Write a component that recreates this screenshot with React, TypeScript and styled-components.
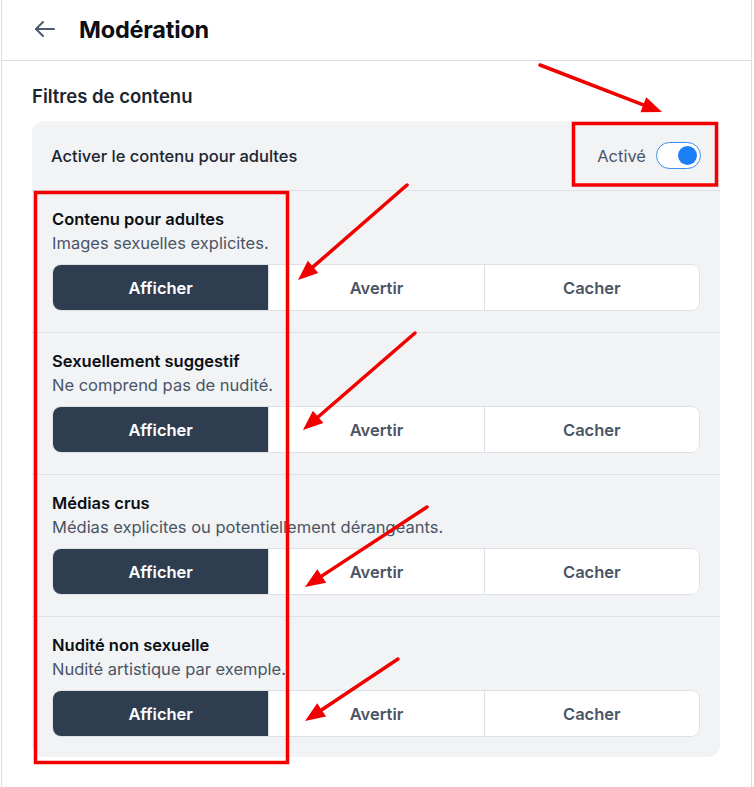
import React, { useState } from "react";
import styled, { createGlobalStyle } from "styled-components";

const GlobalStyle = createGlobalStyle`
  html, body {
    margin: 0;
    padding: 0;
    background: #ffffff;
  }
  body {
    font-family: Inter, "Noto Sans", "Liberation Sans", sans-serif;
    color: #0b0f14;
    -webkit-font-smoothing: antialiased;
  }
`;

const Page = styled.div`
  position: relative;
  width: 751px;
  min-height: 787px;
  margin-left: 1px;
  border-left: 1px solid #dcdfe4;
  border-right: 1px solid #dcdfe4;
  box-sizing: border-box;
`;

const Header = styled.header`
  height: 60px;
  display: flex;
  align-items: center;
  gap: 21px;
  padding: 0 0 0 30px;
  border-bottom: 1px solid #d9dde3;
`;

const BackButton = styled.button`
  display: flex;
  align-items: center;
  justify-content: center;
  width: 26px;
  height: 26px;
  margin-top: -2px;
  padding: 0;
  border: none;
  background: none;
  color: #4b5a70;
  cursor: pointer;
`;

const Title = styled.h1`
  margin: -2px 0 0;
  font-size: 23.5px;
  font-weight: 700;
  letter-spacing: -0.2px;
  color: #0b0f14;
`;

const Content = styled.main`
  padding: 23px 31px 30px 30px;
`;

const SectionTitle = styled.h2`
  margin: 0 0 13px;
  font-size: 18.5px;
  line-height: 24px;
  font-weight: 600;
  color: #1c2532;
`;

const Card = styled.div`
  background: #f1f3f5;
  border-radius: 12px;
  overflow: hidden;
`;

const ToggleRow = styled.div`
  height: 69px;
  display: flex;
  align-items: center;
  justify-content: space-between;
  padding: 0 19px 0 19px;
  border-bottom: 1px solid #dfe2e6;
`;

const RowLabel = styled.span`
  font-size: 16.5px;
  font-weight: 500;
  color: #1c2532;
`;

const ToggleWrap = styled.label`
  display: flex;
  align-items: center;
  gap: 10px;
  font-size: 16.5px;
  color: #4a5566;
  cursor: pointer;
`;

const Switch = styled.span<{ $on: boolean }>`
  position: relative;
  width: 45px;
  height: 27px;
  border-radius: 14px;
  border: 1px solid ${(p) => (p.$on ? "#3c8ff0" : "#c9ced6")};
  background: #ffffff;
  box-sizing: border-box;

  &::after {
    content: "";
    position: absolute;
    top: 3px;
    left: ${(p) => (p.$on ? "21px" : "3px")};
    width: 19px;
    height: 19px;
    border-radius: 50%;
    background: ${(p) => (p.$on ? "#1d7ff5" : "#c9ced6")};
  }
`;

const Filter = styled.div<{ $last?: boolean }>`
  padding: 17px 20px ${(p) => (p.$last ? "20px" : "21px")};
  border-bottom: ${(p) => (p.$last ? "none" : "1px solid #dfe2e6")};
`;

const FilterName = styled.div`
  font-size: 16.5px;
  line-height: 22px;
  font-weight: 600;
  color: #0b0f14;
`;

const FilterDesc = styled.div`
  margin-top: 2px;
  font-size: 16.5px;
  line-height: 22px;
  color: #4a5566;
`;

const Segmented = styled.div`
  margin-top: 10px;
  display: grid;
  grid-template-columns: repeat(3, 1fr);
  height: 47px;
  border: 1px solid #dde1e6;
  border-radius: 9px;
  overflow: hidden;
  background: #ffffff;
  box-sizing: border-box;
`;

const Segment = styled.button<{ $active: boolean }>`
  border: none;
  border-left: 1px solid #dde1e6;
  padding: 0;
  font-family: inherit;
  font-size: 16.5px;
  font-weight: 600;
  background: ${(p) => (p.$active ? "#2e3e50" : "#ffffff")};
  color: ${(p) => (p.$active ? "#ffffff" : "#4a5566")};
  cursor: pointer;

  &:first-child {
    border-left: none;
  }
`;

const Annotations = styled.svg`
  position: absolute;
  left: -2px;
  top: 0;
  pointer-events: none;
`;

const filters = [
  { name: "Contenu pour adultes", desc: "Images sexuelles explicites." },
  { name: "Sexuellement suggestif", desc: "Ne comprend pas de nudité." },
  { name: "Médias crus", desc: "Médias explicites ou potentiellement dérangeants." },
  { name: "Nudité non sexuelle", desc: "Nudité artistique par exemple." },
];

const options = ["Afficher", "Avertir", "Cacher"];

const arrows = [
  [540, 65, 662, 112],
  [407, 185, 298, 280],
  [415, 333, 303, 430],
  [427, 507, 305, 587],
  [398, 659, 305, 721],
];

const Arrow = ({ x1, y1, x2, y2 }: { x1: number; y1: number; x2: number; y2: number }) => {
  const dx = x2 - x1;
  const dy = y2 - y1;
  const len = Math.hypot(dx, dy);
  const ux = dx / len;
  const uy = dy / len;
  const head = 20;
  const half = 8;
  const bx = x2 - ux * head;
  const by = y2 - uy * head;
  const pts = `${x2},${y2} ${bx - uy * half},${by + ux * half} ${bx + uy * half},${by - ux * half}`;
  return (
    <g>
      <line x1={x1} y1={y1} x2={bx + ux * 2} y2={by + uy * 2} stroke="#f20000" strokeWidth={3.5} strokeLinecap="round" />
      <polygon points={pts} fill="#f20000" />
    </g>
  );
};

export default function App() {
  const [adult, setAdult] = useState(true);
  const [choices, setChoices] = useState<string[]>(filters.map(() => "Afficher"));

  return (
    <>
      <GlobalStyle />
      <Page>
        <Header>
          <BackButton aria-label="Retour">
            <svg width="24" height="24" viewBox="0 0 24 24" fill="none" stroke="currentColor" strokeWidth="2" strokeLinecap="round" strokeLinejoin="round">
              <path d="M21 12H3" />
              <path d="M10 5l-7 7 7 7" />
            </svg>
          </BackButton>
          <Title>Modération</Title>
        </Header>
        <Content>
          <SectionTitle>Filtres de contenu</SectionTitle>
          <Card>
            <ToggleRow>
              <RowLabel>Activer le contenu pour adultes</RowLabel>
              <ToggleWrap onClick={() => setAdult(!adult)}>
                {adult ? "Activé" : "Désactivé"}
                <Switch $on={adult} />
              </ToggleWrap>
            </ToggleRow>
            {filters.map((f, i) => (
              <Filter key={f.name} $last={i === filters.length - 1}>
                <FilterName>{f.name}</FilterName>
                <FilterDesc>{f.desc}</FilterDesc>
                <Segmented>
                  {options.map((o) => (
                    <Segment
                      key={o}
                      $active={choices[i] === o}
                      onClick={() => setChoices(choices.map((c, j) => (j === i ? o : c)))}
                    >
                      {o}
                    </Segment>
                  ))}
                </Segmented>
              </Filter>
            ))}
          </Card>
        </Content>
        <Annotations width="754" height="787" viewBox="0 0 754 787">
          <rect x="573.5" y="123.5" width="143" height="61.5" fill="none" stroke="#f20000" strokeWidth="3.5" />
          <rect x="35.5" y="192.5" width="252" height="570" fill="none" stroke="#f20000" strokeWidth="3.5" />
          {arrows.map(([x1, y1, x2, y2], i) => (
            <Arrow key={i} x1={x1} y1={y1} x2={x2} y2={y2} />
          ))}
        </Annotations>
      </Page>
    </>
  );
}
